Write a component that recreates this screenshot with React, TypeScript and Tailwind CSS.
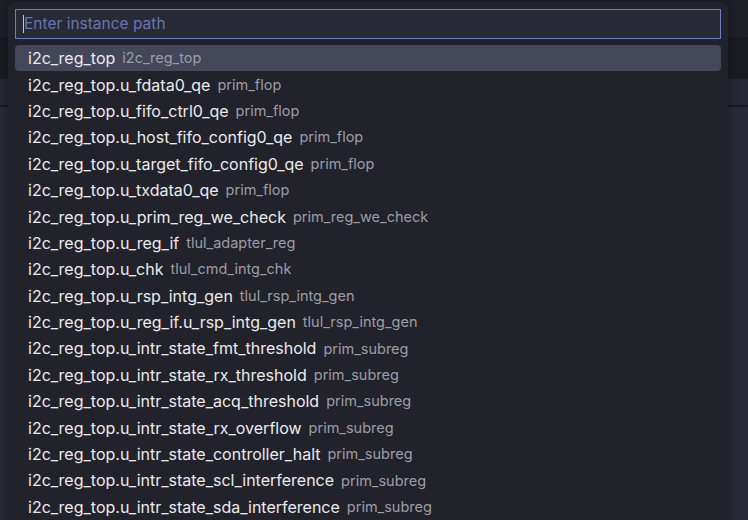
import React from "react";

const rows: [string, string][] = [
  ["i2c_reg_top", "i2c_reg_top"],
  ["i2c_reg_top.u_fdata0_qe", "prim_flop"],
  ["i2c_reg_top.u_fifo_ctrl0_qe", "prim_flop"],
  ["i2c_reg_top.u_host_fifo_config0_qe", "prim_flop"],
  ["i2c_reg_top.u_target_fifo_config0_qe", "prim_flop"],
  ["i2c_reg_top.u_txdata0_qe", "prim_flop"],
  ["i2c_reg_top.u_prim_reg_we_check", "prim_reg_we_check"],
  ["i2c_reg_top.u_reg_if", "tlul_adapter_reg"],
  ["i2c_reg_top.u_chk", "tlul_cmd_intg_chk"],
  ["i2c_reg_top.u_rsp_intg_gen", "tlul_rsp_intg_gen"],
  ["i2c_reg_top.u_reg_if.u_rsp_intg_gen", "tlul_rsp_intg_gen"],
  ["i2c_reg_top.u_intr_state_fmt_threshold", "prim_subreg"],
  ["i2c_reg_top.u_intr_state_rx_threshold", "prim_subreg"],
  ["i2c_reg_top.u_intr_state_acq_threshold", "prim_subreg"],
  ["i2c_reg_top.u_intr_state_rx_overflow", "prim_subreg"],
  ["i2c_reg_top.u_intr_state_controller_halt", "prim_subreg"],
  ["i2c_reg_top.u_intr_state_scl_interference", "prim_subreg"],
  ["i2c_reg_top.u_intr_state_sda_interference", "prim_subreg"],
];

export default function App() {
  return (
    <div
      className="relative w-[748px] h-[520px] overflow-hidden bg-[#282a36]"
      style={{ fontFamily: "Inter, 'Noto Sans', sans-serif" }}
    >
      <div className="flex flex-col">
        <div className="h-[37px] bg-[#1f2027]" />
        <div className="h-[42px] bg-[#1a1b21]" />
        <div className="h-[26px] bg-[#272833]" />
        <div className="h-[2px] bg-[#1a1b20]" />
      </div>
      <div className="absolute left-[8px] top-[2px] w-[720px] h-[540px] rounded-[6px] bg-[#22222b] shadow-[0_0_10px_rgba(0,0,0,0.35)] px-[7px] pt-[7px]">
        <div className="h-[30px] border border-[#6b7ec4] bg-[#282a36] flex items-center pl-[7px]">
          <div className="w-px h-[18px] bg-[#c8c8d0]" />
          <span className="text-[15.5px] text-[#6677b0] leading-none">Enter instance path</span>
        </div>
        <div className="mt-[6px] flex flex-col">
          {rows.map(([name, type], i) => (
            <div
              key={i}
              className={
                "h-[26.4px] flex items-center pl-[13px] rounded-[4px] whitespace-nowrap " +
                (i === 0 ? "bg-[#444659]" : "")
              }
            >
              <span className="text-[16px] text-[#ebebee]">{name}</span>
              <span className="text-[14.5px] text-[#9d9da6] ml-[7px]">{type}</span>
            </div>
          ))}
        </div>
      </div>
    </div>
  );
}
